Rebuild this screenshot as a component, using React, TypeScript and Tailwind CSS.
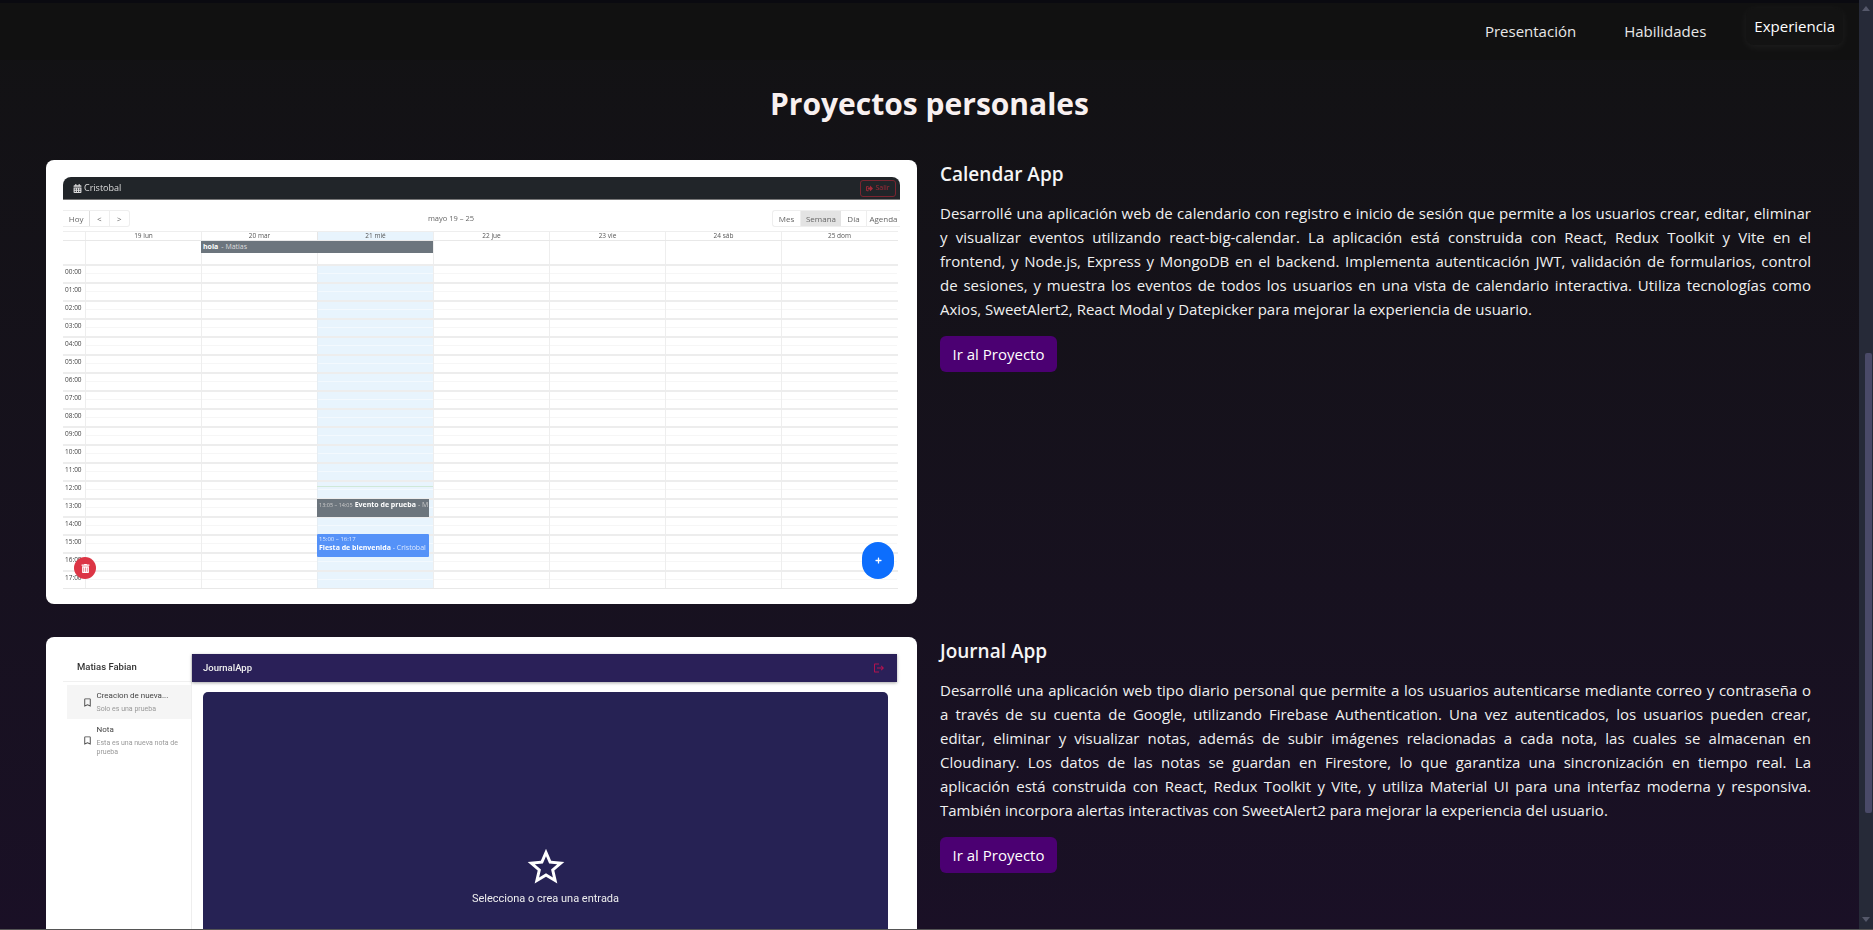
import React from "react"
import { FaCalendarAlt, FaPlus, FaSignOutAlt, FaTrashAlt } from "react-icons/fa"
import { MdBookmarkBorder, MdLogout, MdStarBorder } from "react-icons/md"

const hours = ["00:00", "01:00", "02:00", "03:00", "04:00", "05:00", "06:00", "07:00", "08:00", "09:00", "10:00", "11:00", "12:00", "13:00", "14:00", "15:00", "16:00", "17:00"]
const days = ["19 lun", "20 mar", "21 mié", "22 jue", "23 vie", "24 sáb", "25 dom"]

// one entry per line, the breaks are the ones of the original page
const calendarText = [
    "Desarrollé una aplicación web de calendario con registro e inicio de sesión que permite a los usuarios crear, editar, eliminar",
    "y visualizar eventos utilizando react-big-calendar. La aplicación está construida con React, Redux Toolkit y Vite en el",
    "frontend, y Node.js, Express y MongoDB en el backend. Implementa autenticación JWT, validación de formularios, control",
    "de sesiones, y muestra los eventos de todos los usuarios en una vista de calendario interactiva. Utiliza tecnologías como",
    "Axios, SweetAlert2, React Modal y Datepicker para mejorar la experiencia de usuario.",
]
const journalText = [
    "Desarrollé una aplicación web tipo diario personal que permite a los usuarios autenticarse mediante correo y contraseña o",
    "a través de su cuenta de Google, utilizando Firebase Authentication. Una vez autenticados, los usuarios pueden crear,",
    "editar, eliminar y visualizar notas, además de subir imágenes relacionadas a cada nota, las cuales se almacenan en",
    "Cloudinary. Los datos de las notas se guardan en Firestore, lo que garantiza una sincronización en tiempo real. La",
    "aplicación está construida con React, Redux Toolkit y Vite, y utiliza Material UI para una interfaz moderna y responsiva.",
    "También incorpora alertas interactivas con SweetAlert2 para mejorar la experiencia del usuario.",
]

function ProjectText(props: { title: string; lines: string[] }) {
    return (
        <div className="w-[871px]">
            <h3 className="text-[19px] leading-7 font-semibold text-[#f5f5f5]">{props.title}</h3>
            <p className="mt-[13px] text-[15px] leading-6 text-[#f0f0f0]">
                {props.lines.map((l, i) => (
                    <span key={i} className={i < props.lines.length - 1 ? "block [text-align-last:justify]" : "block"}>{l}</span>
                ))}
            </p>
            <a className="mt-[15px] inline-flex h-9 w-[117px] items-center justify-center rounded-md bg-[#4b0072] text-[15px] text-white">Ir al Proyecto</a>
        </div>
    )
}

function CalendarShot() {
    return (
        <div className="h-[444px] w-[871px] shrink-0 rounded-lg bg-white p-[17px] [font-family:'Open_Sans',sans-serif]">
            <div className="relative w-[837px] blur-[0.3px]">
                <div className="flex h-[23px] items-center justify-between rounded-t-lg border-b border-[#777] bg-[#212529] pl-[10px] pr-1">
                    <div className="flex items-center gap-[2px] text-[9px] text-[#ddd]">
                        <FaCalendarAlt size={9} /> Cristobal
                    </div>
                    <div className="flex h-[17px] w-9 items-center justify-center gap-[2px] rounded-[3px] border border-[#7a2530] text-[7px] text-[#a52a38]">
                        <FaSignOutAlt size={7} /> Salir
                    </div>
                </div>
                <div className="mt-[10px] flex h-[17px] items-center justify-between text-[8px] text-[#666]">
                    <div className="flex h-full w-[67px] rounded-r-[3px] border border-l-0 border-[#eee]">
                        <span className="flex w-7 items-center justify-center border-r border-[#ddd]">Hoy</span>
                        <span className="flex w-5 items-center justify-center border-r border-[#eee]">&lt;</span>
                        <span className="flex w-5 items-center justify-center">&gt;</span>
                    </div>
                    <span className="text-[7.5px]">mayo 19 – 25</span>
                    <div className="flex h-full w-[128px] rounded-l-[3px] border border-r-0 border-[#eee]">
                        <span className="flex w-7 items-center justify-center border-r border-[#eee]">Mes</span>
                        <span className="flex w-10 items-center justify-center bg-[#e3e3e3]">Semana</span>
                        <span className="flex w-[26px] items-center justify-center border-r border-[#eee]">Día</span>
                        <span className="flex w-[33px] items-center justify-center">Agenda</span>
                    </div>
                </div>
                <div className="relative mt-1 w-[835px] border-t border-[#eee]">
                    <div className="grid h-2 grid-cols-[22px_repeat(7,116px)] text-[6.5px] leading-[8px] text-[#555]">
                        <div />
                        {days.map((d, i) => (
                            <div key={i} className={i == 2 ? "border-l border-[#e6e6e6] bg-[#e8f4fd] text-center" : "border-l border-[#eee] text-center"}>{d}</div>
                        ))}
                    </div>
                    <div className="grid h-6 grid-cols-[22px_repeat(7,116px)] border-t border-[#e8e8e8]">
                        <div />
                        {days.map((d, i) => (
                            <div key={i} className="border-l border-[#eee]" />
                        ))}
                    </div>
                    {hours.map((h) => (
                        <div key={h} className="grid h-[18px] grid-cols-[22px_repeat(7,116px)] border-t-2 border-[#ededed]">
                            <div className="pl-[2px] text-[6.5px] leading-[11px] text-[#444]">{h}</div>
                            {days.map((d, i) => (
                                <div key={i} className={i == 2 ? "border-l border-[#e6eef4] bg-[#e8f4fd]" : "border-l border-[#eee]"}>
                                    <div className={i == 2 ? "h-2 border-b border-[#f3f9fe]" : "h-2 border-b border-[#f6f6f6]"} />
                                </div>
                            ))}
                        </div>
                    ))}
                    <div className="border-t border-[#e8e8e8]" />

                    <div className="absolute left-[138px] top-[9px] flex h-3 w-[232px] items-center bg-[#6c757d] pl-[2px] text-[7px] text-[#ddd]">
                        <b className="mr-[3px] text-white">hola</b> - Matias
                    </div>
                    <div className="absolute left-[254px] top-[254px] h-px w-[116px] bg-[#cfe8d8]" />
                    <div className="absolute left-[254px] top-[267px] flex h-[18px] w-[112px] items-start overflow-hidden whitespace-nowrap bg-[#6c757d] px-[2px] text-[7px] leading-[12px] text-[#ccc]">
                        <span className="mr-[2px] text-[5.5px]">13:05 – 14:05</span>
                        <b className="mr-[2px] text-white">Evento de prueba</b> - M
                    </div>
                    <div className="absolute left-[254px] top-[302px] h-[23px] w-[112px] overflow-hidden whitespace-nowrap rounded-[1px] bg-[#5592f8] px-[2px] text-[7px] leading-[8px] text-[#dbe8ff]">
                        <div className="mt-[1px] text-[6px]">15:00 – 16:17</div>
                        <div className="mt-[1px]"><b className="text-white">Fiesta de bienvenida</b> - Cristobal</div>
                    </div>
                </div>
                <div className="absolute left-[11px] top-[380px] flex h-[22px] w-[22px] items-center justify-center rounded-full bg-[#dc3545] text-white">
                    <FaTrashAlt size={9} />
                </div>
                <div className="absolute left-[799px] top-[365px] flex h-[37px] w-8 items-center justify-center rounded-full bg-[#0d6efd] text-white">
                    <FaPlus size={7} />
                </div>
            </div>
        </div>
    )
}

function Note(props: { title: string; sub: string; active?: boolean }) {
    return (
        <div className={props.active ? "flex h-[34px] items-center bg-[#f5f5f5] pl-[14.5px]" : "flex items-center py-[5px] pl-[14.5px]"}>
            <MdBookmarkBorder size={11} className="shrink-0 text-[#444]" />
            <div className="ml-1 w-[88px]">
                <div className="text-[8px] leading-[11px] text-[#444]">{props.title}</div>
                <div className="mt-[3.5px] text-[7px] leading-[9px] text-[#999]">{props.sub}</div>
            </div>
        </div>
    )
}

function JournalShot() {
    return (
        <div className="h-[444px] w-[871px] shrink-0 rounded-lg bg-white p-[17px] [font-family:Roboto,sans-serif]">
            <div className="flex h-full w-[834px] blur-[0.3px]">
                <div className="w-[129px] shrink-0 border-r border-[#eee]">
                    <div className="flex h-7 items-center border-b border-[#f0f0f0] pl-[14px] text-[9.5px] font-medium text-[#333]">Matias Fabian</div>
                    <div className="mt-[3px] pl-1">
                        <Note title="Creacion de nueva..." sub="Solo es una prueba" active />
                        <Note title="Nota" sub="Esta es una nueva nota de prueba" />
                    </div>
                </div>
                <div className="flex-1">
                    <div className="flex h-7 items-center justify-between bg-[#2a2058] pl-[11px] pr-3 text-[9.5px] font-medium text-[#eee] shadow-[0_1px_3px_rgba(0,0,0,0.35)]">
                        JournalApp
                        <MdLogout size={12} className="text-[#b3124f]" />
                    </div>
                    <div className="ml-[11px] mr-[9px] mt-[10px] flex h-[360px] flex-col items-center rounded-[5px] bg-[#262254] pt-[153px] text-white">
                        <MdStarBorder size={44} />
                        <div className="mt-[2px] text-[11px] text-[#eee]">Selecciona o crea una entrada</div>
                    </div>
                </div>
            </div>
        </div>
    )
}

export default function App() {
    return (
        <div className="flex h-screen w-screen overflow-hidden border-b border-[#555] bg-gradient-to-b from-[#121213] to-[#1a1026] [font-family:'Open_Sans',sans-serif]">
            <div className="w-[1859px] shrink-0">
                <div className="h-[3px] bg-[#0a0a10]" />
                <nav className="flex h-[57px] items-center justify-end gap-8 bg-[#111111] pr-4 text-[15px] text-[#e8e8e8]">
                    <a className="px-2">Presentación</a>
                    <a className="px-2">Habilidades</a>
                    <a className="-translate-y-[5px] rounded-lg bg-[#131313] px-2 py-[7px] text-white shadow-[0_2px_8px_rgba(255,255,255,0.06)]">Experiencia</a>
                </nav>
                <h2 className="mt-[22px] text-center text-[30px] leading-[44px] font-bold text-[#f8f0f0]">Proyectos personales</h2>
                <div className="mt-[34px] flex flex-col gap-[33px] pl-[46px]">
                    <div className="flex gap-[23px]">
                        <CalendarShot />
                        <ProjectText title="Calendar App" lines={calendarText} />
                    </div>
                    <div className="flex gap-[23px]">
                        <JournalShot />
                        <ProjectText title="Journal App" lines={journalText} />
                    </div>
                </div>
            </div>
            <div className="flex w-[14px] flex-col items-center bg-[#262a38] pt-[6px] text-[#55586a]">
                <div className="h-0 w-0 border-x-[4px] border-b-[5px] border-x-transparent border-b-[#55586a]" />
                <div className="ml-1 mt-[342px] h-[460px] w-[7px] rounded-[2px] bg-[#4a4a68]" />
                <div className="mt-[104px] h-0 w-0 border-x-[4px] border-t-[5px] border-x-transparent border-t-[#55586a]" />
            </div>
        </div>
    )
}
